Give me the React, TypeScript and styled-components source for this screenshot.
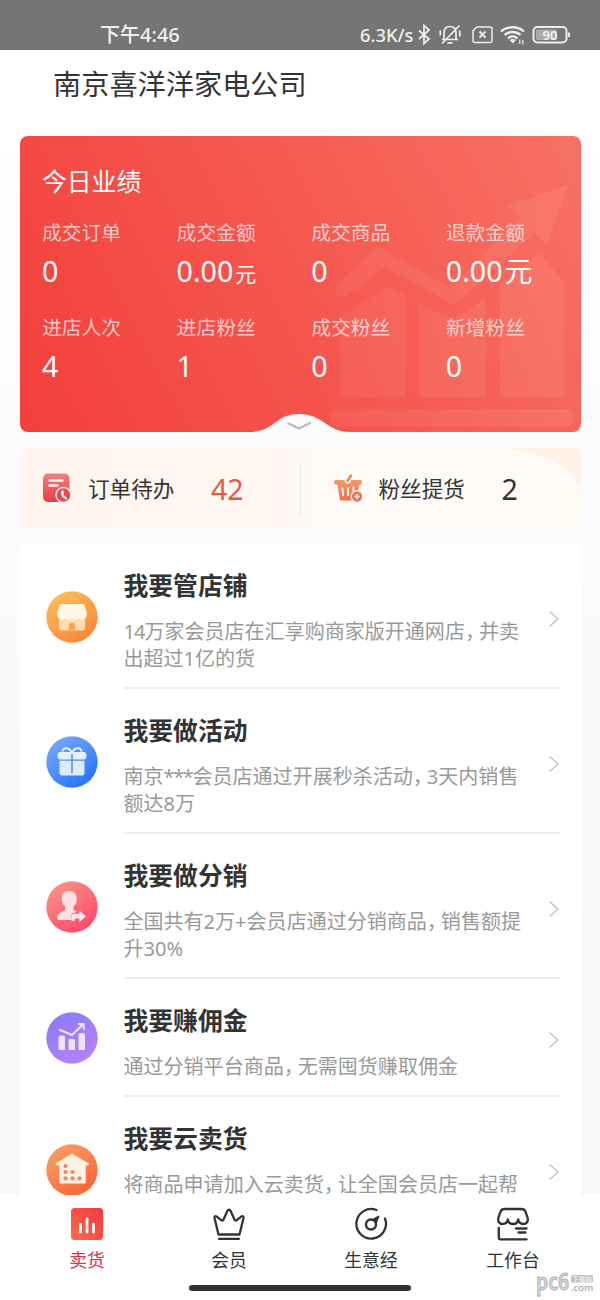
import React from "react";
import styled, { createGlobalStyle } from "styled-components";

const Global = createGlobalStyle`
  * { box-sizing: border-box; }
  body { margin: 0; background: #fff; font-family: "Noto Sans", "Noto Sans CJK SC", sans-serif; }
`;

const Screen = styled.div`
  width: 600px;
  height: 1300px;
  display: flex;
  flex-direction: column;
  overflow: hidden;
  color: #333;
  background: linear-gradient(#fff 0, #fff 136px, #fafafa 620px, #f8f8f8 100%);
`;

const StatusBar = styled.header`
  height: 50px;
  flex: none;
  background: #757575;
  color: #f0f0f0;
  display: flex;
  justify-content: space-between;
  padding: 20px 30px 0 100px;
  font-size: 20px;
  line-height: 29px;
  font-weight: 500;
`;

const StatusGroup = styled.div`
  display: flex;
  align-items: center;
  height: 29px;
`;

const Speed = styled.span`
  font-size: 18.3px;
  width: 55px;
  padding-bottom: 1px;
  white-space: nowrap;
`;

const Main = styled.main`
  flex: 1;
  min-height: 0;
  overflow: hidden;
  padding: 0 19px 0 19.5px;
`;

const ShopName = styled.h1`
  margin: 0;
  height: 86px;
  padding: 13px 0 0 33.5px;
  font-size: 28.2px;
  line-height: 42px;
  font-weight: 400;
  color: #333;
`;

const Performance = styled.section`
  position: relative;
  height: 296px;
  border-radius: 8px;
  overflow: hidden;
  color: #fff;
  background: linear-gradient(62deg, #f43f3b 0%, #f5564e 48%, #f87263 100%);
  padding: 27px 0 0 22.5px;
`;

const Backdrop = styled.svg`
  position: absolute;
  left: 0;
  top: 0;
`;

const CardTitle = styled.h2`
  position: relative;
  margin: 0;
  font-size: 24.8px;
  line-height: 36px;
  font-weight: 400;
`;

const Metrics = styled.div`
  position: relative;
  display: grid;
  grid-template-columns: repeat(4, 134.6px);
  grid-auto-rows: 94.5px;
  padding-top: 20px;
`;

const Label = styled.div`
  font-size: 19.8px;
  line-height: 28px;
  color: rgba(255, 255, 255, 0.7);
`;

const Value = styled.div`
  font-size: 28.6px;
  line-height: 36px;
  height: 36px;
  margin-top: 6px;
  white-space: nowrap;
`;

const Unit = styled.span<{ $size: number }>`
  font-size: ${(p) => p.$size}px;
  margin-left: 2px;
`;

const Todo = styled.section`
  position: relative;
  margin-top: 16px;
  height: 80px;
  border-radius: 8px;
  overflow: hidden;
  display: flex;
  background: linear-gradient(90deg, #fff4ee 0%, #fff8f3 40%, #fffbf8 75%, #fffaf4 100%);
`;

const TodoItem = styled.div<{ $pad: number }>`
  position: relative;
  flex: none;
  width: 280.5px;
  display: flex;
  align-items: center;
  padding: 1px 0 0 ${(p) => p.$pad}px;
  font-size: 21.6px;
`;

const TodoName = styled.span`
  width: 87px;
  margin-left: 15px;
  line-height: 32px;
  white-space: nowrap;
`;

const TodoCount = styled.span<{ $hot?: boolean }>`
  margin-left: 36px;
  font-size: 28.6px;
  line-height: 34px;
  color: ${(p) => (p.$hot ? "#e85a40" : "#333")};
`;

const Separator = styled.div`
  position: relative;
  width: 1px;
  height: 53px;
  margin-top: 15px;
  background: #ebe8e6;
`;

const List = styled.section`
  margin-top: 16px;
  border-radius: 8px;
  background: #fff;
  padding: 0 21px 0 26.5px;
`;

const Row = styled.article<{ $height: number }>`
  height: ${(p) => p.$height}px;
  display: flex;
  align-items: center;
`;

const RowBody = styled.div`
  flex: 1;
  height: 100%;
  margin-left: 25.5px;
  padding-top: 23px;
  border-bottom: 2px solid #ededed;
  display: flex;
  justify-content: space-between;
`;

const RowTitle = styled.h3`
  margin: 0;
  font-size: 24.8px;
  line-height: 37px;
  font-weight: 700;
  color: #333;
`;

const RowText = styled.p`
  margin: 14px 0 0;
  font-size: 20.05px;
  line-height: 26.6px;
  color: #999;
  white-space: nowrap;
`;

const Comma = styled.span`
  display: inline-block;
  width: 14px;
  font-family: "Noto Sans CJK SC", sans-serif;
  font-feature-settings: "halt" 1;
`;

const Tight = styled.span<{ $by: number }>`
  letter-spacing: -${(p) => p.$by}px;
`;

const Arrow = styled.svg`
  flex: none;
  align-self: center;
  margin-top: -17px;
`;

const Nav = styled.nav`
  flex: none;
  height: 105px;
  background: #fff;
  padding: 12px 16px 0;
  position: relative;
`;

const Tabs = styled.div`
  display: flex;
`;

const Tab = styled.div<{ $active?: boolean }>`
  flex: 1;
  display: flex;
  flex-direction: column;
  align-items: center;
  font-size: 17.8px;
  line-height: 26px;
  gap: 6px;
  color: ${(p) => (p.$active ? "#dc3545" : "#333")};
`;

const HomeBar = styled.div`
  width: 222px;
  height: 5.5px;
  border-radius: 3px;
  background: #333;
  margin: 12px 0 0 173px;
`;

const Watermark = styled.svg`
  position: absolute;
  right: 3px;
  bottom: 3px;
`;

const StatusIcons = () => (
  <svg width="155" height="28" viewBox="0 0 155 28" fill="none" stroke="#ededed" strokeWidth="1.5">
    <path d="M4 9.500l10 8.500-5 4.500V4.500l5 4.500-10 9" strokeWidth="1.800" />
    <path d="M27 18.500h16M29 18v-6c0-4 2-6.500 6-6.500s6 2.500 6 6.500v6M32.500 21.800h5M44.500 4.500L27 22.500M25.300 9.500v5M44.800 9.500v6" strokeWidth="1.700" />
    <path d="M61.500 6h13.500a2 2 0 0 1 2 2v11.500a2 2 0 0 1-2 2H60a2 2 0 0 1-2-2v-9.500z" />
    <path d="M64.500 10.500l6 6m0-6l-6 6" strokeWidth="1.800" />
    <path d="M86 10.500c6-5.700 17-5.700 23 0M89.500 14c4.500-4 11.500-4 16 0M93 17.300c2.800-2.400 6.700-2.400 9.500 0" strokeWidth="2.300" />
    <path d="M94.500 19c1.800-1.500 4.800-1.500 6.600 0l-3.300 3.500z" fill="#ededed" stroke="none" />
    <path d="M104.800 18.500v4.500M107.800 19V23.500" strokeWidth="1.200" />
    <rect x="118.500" y="6" width="33" height="15.500" rx="4" strokeWidth="2" />
    <rect x="121" y="8.500" width="21" height="10.500" rx="1.500" fill="#a9a9a9" stroke="none" />
    <path d="M154 11.500v4.500" strokeWidth="2" />
    <text x="135" y="18.500" textAnchor="middle" fontSize="13" fontWeight="600" fill="#f3f3f3" stroke="none" fontFamily="Noto Sans">90</text>
  </svg>
);

const PerformanceArt = () => (
  <Backdrop width="562" height="296" viewBox="0 0 562 296">
    <defs>
      <linearGradient id="art" gradientUnits="userSpaceOnUse" x1="320" y1="0" x2="550" y2="0">
        <stop stopColor="#fff" stopOpacity="0.05" /><stop offset="1" stopColor="#fff" stopOpacity="0.075" />
      </linearGradient>
    </defs>
    <g fill="url(#art)">
      <path d="M320 261v-80l49-31 16.500 9.300V261zM399 261V168l35 15 31.500-21V261zM480 261V149l39-32 25.500 30V261z" />
      <rect x="310.500" y="273" width="242.500" height="17.500" rx="6" />
      <path d="M319 147l38-36.500 73.500 41.500 70-71-13.500-11 61-21-21 59-12.500-11L434 169l-68.500-38-38 28c-8 5-18-4-8.500-12z" />
    </g>
    <path d="M228 296c28 0 26-18 51-18s27 18 51 18z" fill="#fcfcfc" />
    <path d="M268.500 287.500l10.500 5 11-5.500" fill="none" stroke="#b9b9b9" strokeWidth="2.200" strokeLinecap="round" strokeLinejoin="round" />
  </Backdrop>
);

const OrderIcon = () => (
  <svg width="31" height="32" viewBox="0 0 31 32">
    <defs>
      <linearGradient id="order" x2="0" y2="1">
        <stop stopColor="#f47f80" /><stop offset="1" stopColor="#e93b45" />
      </linearGradient>
    </defs>
    <rect x="1" y="0.500" width="26.500" height="28.500" rx="5" fill="url(#order)" />
    <path d="M7.500 7.500h13M7.500 12.500h8" stroke="#fff" strokeOpacity="0.900" strokeWidth="2.400" strokeLinecap="round" />
    <circle cx="21.500" cy="22" r="7.500" fill="#ea4750" stroke="#fff3ed" strokeWidth="1.500" />
    <path d="M20.500 18.500v4l3.500 3" fill="none" stroke="#fff" strokeWidth="2.300" strokeLinecap="round" />
  </svg>
);

const BasketIcon = () => (
  <svg width="31" height="32" viewBox="0 0 31 32">
    <defs>
      <linearGradient id="basket" x2="0" y2="1">
        <stop stopColor="#f39a6b" /><stop offset="1" stopColor="#f0714d" />
      </linearGradient>
    </defs>
    <path d="M2.500 7h25c2 0 2 4 0 4.500l-1.500.5-2 15.500H7L4.500 12l-2-.5c-2-.5-2-4.500 0-4.500z" fill="url(#basket)" />
    <path d="M11.500 7c0 4.500 6.500 4.500 6.500 0" fill="#fff8f3" />
    <path d="M14.500 8L18 2.500" stroke="#f08b60" strokeWidth="2.600" strokeLinecap="round" />
    <path d="M9.500 15.500l.5 6.500M15 15.500v6.500M20.500 14.500l-.3 3" stroke="#fff5ee" strokeWidth="2" strokeLinecap="round" />
    <circle cx="24" cy="23.500" r="5.800" fill="#f0764f" stroke="#fff8f3" strokeWidth="1.300" />
    <path d="M24 21v5M21.500 23.500h5" stroke="#fff" strokeWidth="1.600" />
  </svg>
);

const glyphs: Record<string, React.ReactNode> = {
  shop: (
    <>
      <path d="M13 24h26v13.500a2 2 0 0 1-2 2H15a2 2 0 0 1-2-2z" fill="#ffdcae" />
      <path d="M16 13h20c2 0 2.600 1.500 3.400 4l1.300 4.500c.6 3.500-1 6.500-3.700 7-2 .3-3.300-.2-4.300-1-2 1.800-4.500 1.800-6.500.2-2 1.600-4.700 1.600-6.600-.2-1.300 1-2.800 1.400-4.600 1-2.700-.6-4.300-3.500-3.700-7L12.600 17c.8-2.500 1.400-4 3.400-4z" fill="#fff6e6" />
      <path d="M22.700 39.500V35a3.300 3.300 0 0 1 6.600 0v4.500z" fill="#fba561" />
    </>
  ),
  gift: (
    <>
      <path d="M26 17c-2.500-6-9.500-6-9.500-1.500M26 17c2.500-6 9.500-6 9.500-1.500" fill="none" stroke="#e7f0ff" strokeWidth="2" />
      <path d="M14 16h24c3.400 0 3.400 7.500 0 7.500H14c-3.400 0-3.400-7.500 0-7.500z" fill="#e7f0ff" />
      <path d="M13.500 24.800h25v12.200a2.500 2.500 0 0 1-2.500 2.500H16a2.500 2.500 0 0 1-2.500-2.500z" fill="#dfeaff" />
      <path d="M26 18v19" stroke="#4f89f8" strokeWidth="1.500" />
    </>
  ),
  person: (
    <>
      <path d="M23.200 10c5 0 7.600 3.500 7.600 8 0 3.500-1.300 6-3.300 7.500v3.500l3.500 1.500-5.500 2.500v6H13c-2.500 0-2-6 .5-7.200l5.500-2.600v-3.700c-2-1.500-3.300-4-3.300-7.500 0-4.500 2.500-8 7.500-8z" fill="#ffdfe3" />
      <path d="M25.500 40v-3.500c0-3 1-3.800 3.500-3.800h4.500v-3l6.500 5.500-6.500 5.800v-3.500h-4q-1 0-1 2.500z" fill="#ffe8eb" />
    </>
  ),
  growth: (
    <>
      <path d="M12.500 38V25q0-1.500 1.500-1.500h3.500q1.500 0 1.500 1.500v13zM22.500 38v-9.500q0-1.500 1.500-1.500h3.500q1.500 0 1.500 1.500v9.500zM32.500 38V22.500q0-1.500 1.500-1.500h3.500q1.500 0 1.500 1.500V38z" fill="#efe4ff" />
      <path d="M13 17.500l13 5.500L37 12.500" fill="none" stroke="#efe4ff" strokeWidth="2.200" />
      <path d="M32 12h5.800v6" fill="none" stroke="#efe4ff" strokeWidth="1.800" />
    </>
  ),
  house: (
    <>
      <path d="M26 9.500l16 9.500c1.500 1 .7 2.500-.8 2.500H39.700v18H13.300v-18h-2.500c-1.500 0-2-1.500-.5-2.500z" fill="#fff0e6" />
      <g fill="#f4845a">
        <circle cx="19.500" cy="22" r="2.100" /><circle cx="19.500" cy="28" r="2.100" /><circle cx="26.500" cy="28" r="2.100" />
        <circle cx="19.500" cy="34.300" r="2.100" /><circle cx="26.500" cy="34.300" r="2.100" /><circle cx="33.500" cy="34.300" r="2.100" />
      </g>
    </>
  ),
};

const Disc = ({ kind, from, to }: { kind: string; from: string; to: string }) => (
  <svg width="52" height="52" viewBox="0 0 52 52">
    <defs>
      <linearGradient id={kind} x1="0.2" y1="0.05" x2="0.800" y2="0.95">
        <stop stopColor={from} /><stop offset="1" stopColor={to} />
      </linearGradient>
    </defs>
    <circle cx="26" cy="26" r="25.700" fill={`url(#${kind})`} />
    {glyphs[kind]}
  </svg>
);

const rows: { kind: string; from: string; to: string; height: number; title: string; lead?: React.ReactNode; text: string[] }[] = [
  { kind: "shop", from: "#fcbd58", to: "#fb8539", height: 145, title: "我要管店铺", lead: <Tight $by={1}>14</Tight>, text: ["万家会员店在汇享购商家版开通网店，并卖", "出超过1亿的货"] },
  { kind: "gift", from: "#76a6fc", to: "#2474fb", height: 145, title: "我要做活动", lead: <>南京<Tight $by={1.4}>***</Tight></>, text: ["会员店通过开展秒杀活动，3天内销售", "额达8万"] },
  { kind: "person", from: "#fd9086", to: "#fc496b", height: 145, title: "我要做分销", text: ["全国共有2万+会员店通过分销商品，销售额提", "升30%"] },
  { kind: "growth", from: "#8b7cf8", to: "#b582fb", height: 118, title: "我要赚佣金", text: ["通过分销平台商品，无需囤货赚取佣金"] },
  { kind: "house", from: "#fc9c62", to: "#fb6439", height: 145, title: "我要云卖货", text: ["将商品申请加入云卖货，让全国会员店一起帮"] },
];

const metrics = [
  { label: "成交订单", value: "0" },
  { label: "成交金额", value: "0.00", unit: 21 },
  { label: "成交商品", value: "0" },
  { label: "退款金额", value: "0.00", unit: 28 },
  { label: "进店人次", value: "4" },
  { label: "进店粉丝", value: "1" },
  { label: "成交粉丝", value: "0" },
  { label: "新增粉丝", value: "0" },
];

const TextLine = ({ text }: { text: string }) => {
  const [head, tail] = text.split("，");
  return (
    <>
      {head}
      {tail && <><Comma>，</Comma>{tail}</>}
      <br />
    </>
  );
};

const stroke = { fill: "none", stroke: "#333", strokeWidth: 2.3, strokeLinecap: "round", strokeLinejoin: "round" } as const;

const SellIcon = () => (
  <svg width="34" height="34" viewBox="0 0 34 34">
    <defs>
      <linearGradient id="sell" x1="1" y1="0" x2="0" y2="1">
        <stop stopColor="#f5393f" /><stop offset="1" stopColor="#fb6a4c" />
      </linearGradient>
    </defs>
    <rect x="1" y="1" width="32" height="32" rx="3.500" fill="url(#sell)" />
    <path d="M10.500 17.500v7.500M17 12v13M23.500 17.500v7.500" stroke="#fff" strokeWidth="2.800" strokeLinecap="round" />
  </svg>
);

const CrownIcon = () => (
  <svg width="34" height="34" viewBox="0 0 34 34" {...stroke}>
    <path d="M6.500 27.500L2.500 11c-.3-1.800 1.200-2.200 2.300-1.300l4.700 3.600c.8.500 1.500.3 1.900-.5l4.100-9c.6-1.600 2.400-1.600 3 0l4.100 9c.4.800 1.100 1 1.900.5l4.700-3.600c1.100-.9 2.600-.5 2.300 1.300l-4 16.500z" />
    <path d="M7 31.800h20" />
  </svg>
);

const CompassIcon = () => (
  <svg width="34" height="34" viewBox="0 0 34 34" {...stroke}>
    <path d="M22.500 3A14.800 14.800 0 1 0 31 11.500" />
    <circle cx="17" cy="17.500" r="5" strokeWidth="2.400" />
    <path d="M18.500 13l6-3.500-2.500 6.500" fill="#333" strokeWidth="1.800" />
  </svg>
);

const WorkIcon = () => (
  <svg width="34" height="34" viewBox="0 0 34 34" {...stroke}>
    <path d="M8.500 2h17c2 0 3.200.8 4 2.700l2 5.800c1.200 4-1 6.500-4 6.500-2.500 0-4.800-1.500-5.300-4.500-.8 6-9.600 6-10.400 0-.5 3-2.800 4.500-5.300 4.500-3 0-5.200-2.500-4-6.500l2-5.800C5.300 2.800 6.500 2 8.500 2z" />
    <path d="M2.800 21v10q0 1.300 1.300 1.300h26.500M20 21.500h10.500M22.500 25.500h7" />
  </svg>
);

export default function App() {
  return (
    <>
      <Global />
      <Screen>
        <StatusBar>
          <span>下午4:46</span>
          <StatusGroup>
            <Speed>6.3K/s</Speed>
            <StatusIcons />
          </StatusGroup>
        </StatusBar>
        <Main>
          <ShopName>南京喜洋洋家电公司</ShopName>
          <Performance>
            <PerformanceArt />
            <CardTitle>今日业绩</CardTitle>
            <Metrics>
              {metrics.map((m) => (
                <div key={m.label}>
                  <Label>{m.label}</Label>
                  <Value>{m.value}{m.unit && <Unit $size={m.unit}>元</Unit>}</Value>
                </div>
              ))}
            </Metrics>
          </Performance>
          <Todo>
            <Backdrop width="562" height="80" viewBox="0 0 562 80">
              <path d="M482 0h80v45C555 20 528 4 482 0z" fill="#fff2e4" />
            </Backdrop>
            <TodoItem $pad={22.5}>
              <OrderIcon />
              <TodoName>订单待办</TodoName>
              <TodoCount $hot>42</TodoCount>
            </TodoItem>
            <Separator />
            <TodoItem $pad={32}>
              <BasketIcon />
              <TodoName>粉丝提货</TodoName>
              <TodoCount>2</TodoCount>
            </TodoItem>
          </Todo>
          <List>
            {rows.map((r) => (
              <Row key={r.kind} $height={r.height}>
                <Disc kind={r.kind} from={r.from} to={r.to} />
                <RowBody>
                  <div>
                    <RowTitle>{r.title}</RowTitle>
                    <RowText>{r.lead}{r.text.map((t) => <TextLine key={t} text={t} />)}</RowText>
                  </div>
                  <Arrow width="12" height="18" viewBox="0 0 12 18">
                    <path d="M1.500 1.500l8.500 7.500-8.500 7.500" fill="none" stroke="#c4c4c4" strokeWidth="1.500" />
                  </Arrow>
                </RowBody>
              </Row>
            ))}
          </List>
        </Main>
        <Nav>
          <Tabs>
            <Tab $active><SellIcon />卖货</Tab>
            <Tab><CrownIcon />会员</Tab>
            <Tab><CompassIcon />生意经</Tab>
            <Tab><WorkIcon />工作台</Tab>
          </Tabs>
          <HomeBar />
          <Watermark width="62" height="26" viewBox="0 0 62 26">
            <text x="1" y="19" fontSize="23" fontWeight="600" fill="#d6d6d9" stroke="#a9a9ad" strokeWidth="0.800" fontFamily="Noto Sans" textLength="33" lengthAdjust="spacingAndGlyphs">pc6</text>
            <rect x="36" y="4" width="22" height="7.500" rx="1" fill="#c3c3c6" />
            <text x="37" y="10.200" fontSize="6" fill="#fff" fontFamily="Noto Sans CJK SC" textLength="20" lengthAdjust="spacingAndGlyphs">下载站</text>
            <text x="35.500" y="19.500" fontSize="9" fontWeight="600" fill="#b0b0b4" fontFamily="Noto Sans" textLength="23" lengthAdjust="spacingAndGlyphs">.com</text>
          </Watermark>
        </Nav>
      </Screen>
    </>
  );
}
